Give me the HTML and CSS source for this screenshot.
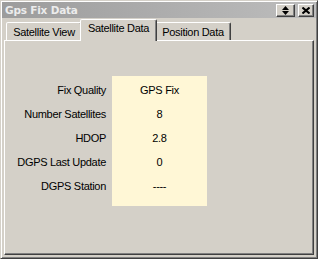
FILE: index.html
```html
<!DOCTYPE html>
<html>
    <head>
        <meta charset="utf-8"/>
        <link rel="stylesheet" href="styles.css">
    </head>
    <body>
        <div class="window">
            <div class="titlebar">
                <span class="title">Gps Fix Data</span>
                <div class="title-buttons">
                    <button class="tb tb-wide">
                        <svg width="7" height="9" viewBox="0 0 7 9">
                            <polygon points="3.5,0 7,4 0,4" fill="#000"/>
                            <polygon points="0,5 7,5 3.5,9" fill="#000"/>
                        </svg>
                    </button>
                    <button class="tb">
                        <svg width="8" height="7" viewBox="0 0 8 7">
                            <path d="M0.5 0.5 L7.5 6.5 M7.5 0.5 L0.5 6.5" stroke="#000" stroke-width="2"/>
                        </svg>
                    </button>
                </div>
            </div>

            <div class="tabs">
                <div class="tab tab-first">Satellite View</div>
                <div class="tab active">Satellite Data</div>
                <div class="tab tab-last">Position Data</div>
            </div>

            <div class="panel">
                <div class="fields">
                    <div class="labels">
                        <div class="row">Fix Quality</div>
                        <div class="row">Number Satellites</div>
                        <div class="row">HDOP</div>
                        <div class="row">DGPS Last Update</div>
                        <div class="row">DGPS Station</div>
                    </div>
                    <div class="values">
                        <div class="row">GPS Fix</div>
                        <div class="row">8</div>
                        <div class="row">2.8</div>
                        <div class="row">0</div>
                        <div class="row">----</div>
                    </div>
                </div>
            </div>
        </div>
    </body>
</html>
```

FILE: styles.css
```css
body {
    margin: 0;
    padding: 0;
    background: #d4d0c8;
    font-family: "Liberation Sans", Arial, sans-serif;
    font-size: 11px;
    letter-spacing: -0.3px;
    color: #000;
}

.window {
    width: 318px;
    height: 259px;
    box-sizing: border-box;
    background: #d4d0c8;
    border: 1px solid;
    border-color: #d4d0c8 #404040 #404040 #d4d0c8;
    box-shadow: inset 1px 1px #fff, inset -1px -1px #808080;
    padding: 1px 3px 3px 3px;
    display: flex;
    flex-direction: column;
}

/* caption */
.titlebar {
    height: 16px;
    margin: 0 -2px;
    padding: 0 2px 0 3px;
    display: flex;
    align-items: center;
    justify-content: space-between;
    background: linear-gradient(to right, #9c9c9c, #bdbdbd);
}

.title {
    font-family: "DejaVu Sans", Verdana, sans-serif;
    font-weight: bold;
    font-size: 10.5px;
    letter-spacing: -0.2px;
    color: #ececec;
}

.title-buttons {
    display: flex;
    gap: 3px;
    padding-top: 1px;
}

.tb {
    width: 16px;
    height: 13px;
    padding: 0;
    margin: 0;
    box-sizing: border-box;
    background: #d4d0c8;
    border: 1px solid;
    border-color: #fff #404040 #404040 #fff;
    box-shadow: inset -1px -1px #808080;
    display: flex;
    align-items: center;
    justify-content: center;
}

.tb-wide {
    width: 19px;
}

/* tabs */
.tabs {
    height: 22px;
    margin-left: 2px;
    display: flex;
    align-items: flex-end;
    position: relative;
    z-index: 1;
}

.tab {
    height: 18px;
    box-sizing: border-box;
    border: 1px solid;
    border-bottom: none;
    border-color: #fff #404040 transparent #fff;
    box-shadow: inset -1px 0 #808080;
    border-radius: 2px 2px 0 0;
    background: #d4d0c8;
    padding: 3px 0 0 0;
    text-align: center;
    line-height: 13px;
}

.tab-first {
    width: 76px;
}

.tab-last {
    width: 76px;
}

.tab.active {
    width: 77px;
    height: 22px;
    margin: 0 -2px -1px -2px;
    padding-top: 2px;
    position: relative;
    z-index: 2;
}

/* page */
.panel {
    flex: 1;
    box-sizing: border-box;
    border: 1px solid;
    border-color: #fff #404040 #404040 #fff;
    box-shadow: inset -1px -1px #808080;
    padding-top: 35px;
}

.fields {
    display: flex;
    gap: 6px;
}

.labels {
    width: 101px;
    text-align: right;
    padding-top: 2px;
}

.values {
    width: 95px;
    background: #fff7d6;
    text-align: center;
    padding: 2px 0 8px 0;
}

.row {
    height: 24px;
    line-height: 24px;
    white-space: nowrap;
}
```
